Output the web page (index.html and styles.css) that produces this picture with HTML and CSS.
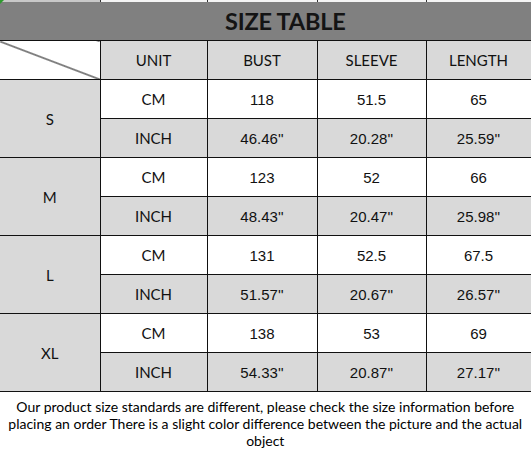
FILE: index.html
```html
<!DOCTYPE html>
<html>
<head>
<meta charset="utf-8">
<link rel="stylesheet" href="styles.css">
</head>
<body>
<div class="sheet">
  <span class="marker"></span>
  <table class="size-table">
    <colgroup>
      <col class="c0"><col class="c1"><col class="c2"><col class="c3"><col class="c4">
    </colgroup>
    <tr class="strip">
      <td class="strip-first"></td><td></td><td></td><td></td><td></td>
    </tr>
    <tr class="title-row">
      <td colspan="5" class="title">SIZE TABLE</td>
    </tr>
    <tr class="row head">
      <td class="diag"></td>
      <td class="lbl">UNIT</td>
      <td class="lbl">BUST</td>
      <td class="lbl">SLEEVE</td>
      <td class="lbl">LENGTH</td>
    </tr>
    <tr class="row cm">
      <td rowspan="2" class="size">S</td>
      <td class="lbl">CM</td><td class="num">118</td><td class="num">51.5</td><td class="num">65</td>
    </tr>
    <tr class="row inch">
      <td class="lbl">INCH</td><td class="num">46.46''</td><td class="num">20.28''</td><td class="num">25.59''</td>
    </tr>
    <tr class="row cm">
      <td rowspan="2" class="size">M</td>
      <td class="lbl">CM</td><td class="num">123</td><td class="num">52</td><td class="num">66</td>
    </tr>
    <tr class="row inch">
      <td class="lbl">INCH</td><td class="num">48.43''</td><td class="num">20.47''</td><td class="num">25.98''</td>
    </tr>
    <tr class="row cm">
      <td rowspan="2" class="size">L</td>
      <td class="lbl">CM</td><td class="num">131</td><td class="num">52.5</td><td class="num">67.5</td>
    </tr>
    <tr class="row inch">
      <td class="lbl">INCH</td><td class="num">51.57''</td><td class="num">20.67''</td><td class="num">26.57''</td>
    </tr>
    <tr class="row cm">
      <td rowspan="2" class="size">XL</td>
      <td class="lbl">CM</td><td class="num">138</td><td class="num">53</td><td class="num">69</td>
    </tr>
    <tr class="row inch">
      <td class="lbl">INCH</td><td class="num">54.33''</td><td class="num">20.87''</td><td class="num">27.17''</td>
    </tr>
    <tr class="foot-row">
      <td colspan="5" class="note">Our product size standards are different, please check the size information before placing an order There is a slight color difference between the picture and the actual object</td>
    </tr>
  </table>
</div>
</body>
</html>
```

FILE: styles.css
```css
html, body {
  margin: 0;
  padding: 0;
  background: #ffffff;
}

.sheet {
  position: relative;
  width: 531px;
  height: 452px;
  overflow: hidden;
}

.marker {
  position: absolute;
  left: 0;
  top: 0;
  width: 0;
  height: 0;
  border-top: 4px solid #2e9a2e;
  border-right: 4px solid transparent;
  z-index: 2;
}

.size-table {
  border-collapse: collapse;
  table-layout: fixed;
  width: 531px;
  color: #111111;
  font-family: Lato, "Liberation Sans", sans-serif;
}

.c0 { width: 100px; }
.c1 { width: 107px; }
.c2 { width: 110px; }
.c3 { width: 109px; }
.c4 { width: 105px; }

.size-table td {
  border: 1px solid #111111;
  padding: 0;
  text-align: center;
  vertical-align: middle;
}

.size-table tr > td:first-child {
  border-left: none;
}

.strip td {
  height: 2px;
  background: #f4f4f4;
  border-top: none;
  border-bottom: none;
  border-color: #333333;
}

.strip td.strip-first {
  background: #c8c8c8;
}

.title-row td {
  height: 38px;
  border-top: none;
}

.title {
  background: #808080;
  font-size: 23.5px;
  font-weight: 700;
  letter-spacing: -0.2px;
  color: #141414;
  padding-left: 40px !important;
}

.row td {
  height: 38px;
  font-size: 15px;
}

.head td {
  background: #d9d9d9;
}

.head td.diag {
  background: linear-gradient(to top right, #ffffff calc(50% - 1px), #111111 50%, #ffffff calc(50% + 1px));
}

.size {
  background: #d9d9d9;
}

.inch td {
  background: #d9d9d9;
}

.cm td {
  background: #ffffff;
}

.cm td.size {
  background: #d9d9d9;
}

.lbl, .size {
  font-family: Lato, "Liberation Sans", sans-serif;
  font-size: 15.5px;
}

.num {
  font-family: "Liberation Sans", Arial, sans-serif;
}

.foot-row td {
  height: 58px;
  background: #ffffff;
  vertical-align: top;
}

.note {
  font-family: Lato, "Liberation Sans", sans-serif;
  font-size: 14px;
  line-height: 17px;
  padding: 6px 6px 0 6px !important;
  color: #000000;
}
```
